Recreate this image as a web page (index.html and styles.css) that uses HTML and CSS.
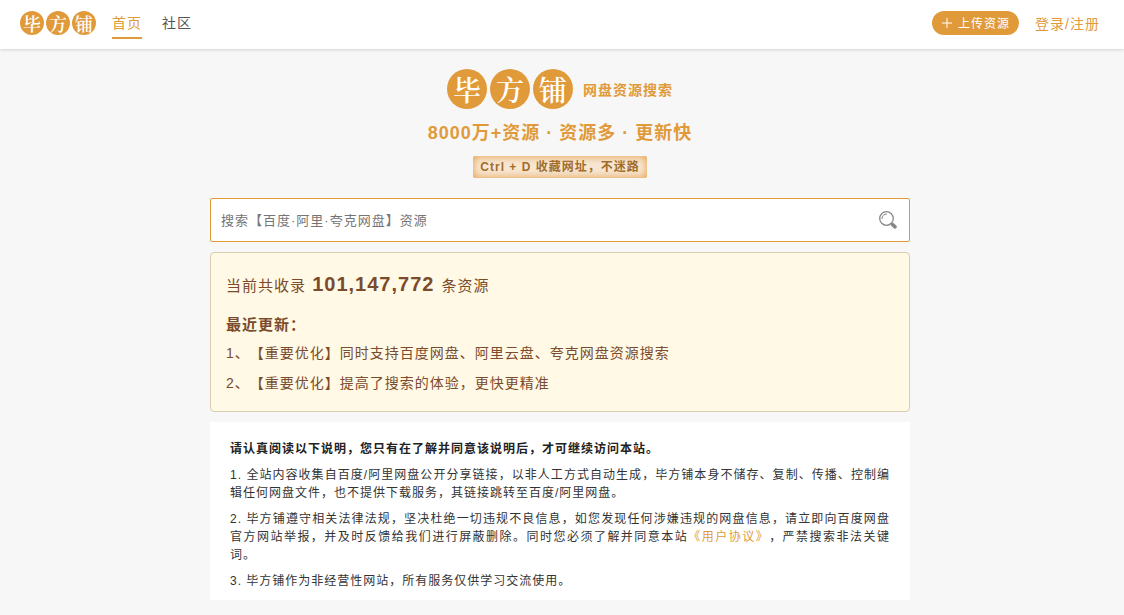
FILE: index.html
```html
<!DOCTYPE html>
<html lang="zh-CN">
<head>
    <meta charset="UTF-8">
    <meta name="viewport" content="width=device-width, initial-scale=1.0">
    <title>毕方铺 - 网盘资源搜索</title>
    <link rel="stylesheet" href="styles.css">
</head>
<body>
    <header class="header">
        <a class="logo" href="/"><span>毕</span><span>方</span><span>铺</span></a>
        <nav class="nav">
            <a class="active" href="/">首页</a>
            <a href="/community">社区</a>
        </nav>
        <div class="user">
            <button class="upload" type="button">
                <svg width="10" height="10" viewBox="0 0 10 10" aria-hidden="true">
                    <path d="M5 0v10M0 5h10" fill="none" stroke="currentColor"/>
                </svg>
                上传资源
            </button>
            <a class="login" href="/login">登录/注册</a>
        </div>
    </header>

    <main class="main">
        <!-- Brand -->
        <div class="brand">
            <h1 class="logo logo-big"><span>毕</span><span>方</span><span>铺</span></h1>
            <span class="brand-text">网盘资源搜索</span>
        </div>
        <p class="slogan">8000万+资源 · 资源多 · 更新快</p>
        <p class="bookmark">Ctrl + D 收藏网址，不迷路</p>

        <!-- Search -->
        <form class="search">
            <input type="text" name="q" aria-label="搜索" placeholder="搜索【百度·阿里·夸克网盘】资源">
            <button type="submit" aria-label="搜索">
                <svg width="18" height="18" viewBox="0 0 18 18" fill="none" stroke="#888">
                    <circle cx="7.5" cy="7.5" r="6.8" stroke-width="1.3"/>
                    <path d="M3 8A4.6 4.6 0 0 1 8 3" stroke-width="1"/>
                    <path d="M12 12l1.5 1.5" stroke-width="1.5"/>
                    <path d="M13.6 13.6l2.4 2.2" stroke-width="3.6" stroke-linecap="round"/>
                </svg>
            </button>
        </form>

        <!-- Stats and updates -->
        <section class="info">
            <p class="total">当前共收录 <strong>101,147,772</strong> 条资源</p>
            <h2>最近更新：</h2>
            <p>1、【重要优化】同时支持百度网盘、阿里云盘、夸克网盘资源搜索</p>
            <p>2、【重要优化】提高了搜索的体验，更快更精准</p>
        </section>

        <!-- Terms -->
        <section class="notice">
            <h2>请认真阅读以下说明，您只有在了解并同意该说明后，才可继续访问本站。</h2>
            <p>1. 全站内容收集自百度/阿里网盘公开分享链接，以非人工方式自动生成，毕方铺本身不储存、复制、传播、控制编辑任何网盘文件，也不提供下载服务，其链接跳转至百度/阿里网盘。</p>
            <p>2. 毕方铺遵守相关法律法规，坚决杜绝一切违规不良信息，如您发现任何涉嫌违规的网盘信息，请立即向百度网盘官方网站举报，并及时反馈给我们进行屏蔽删除。同时您必须了解并同意本站<a href="/agreement">《用户协议》</a>，严禁搜索非法关键词。</p>
            <p>3. 毕方铺作为非经营性网站，所有服务仅供学习交流使用。</p>
        </section>
    </main>
</body>
</html>
```
FILE: styles.css
```css
* {
    box-sizing: border-box;
}

body {
    margin: 0;
    background: #f7f7f7;
    color: #333;
    font-family: "Liberation Sans", "Noto Sans CJK SC", sans-serif;
    font-size: 14px;
    letter-spacing: 1px;
    text-spacing-trim: space-all;
}

h1, h2, p {
    margin: 0;
}

a {
    color: #e19a3a;
    text-decoration: none;
}

button, input {
    font: inherit;
    letter-spacing: inherit;
    border: 0;
    padding: 0;
}

button {
    cursor: pointer;
}

/* header */
.header {
    display: flex;
    align-items: center;
    height: 49px;
    padding: 0 24px 4px 20px;
    background: #fff;
    box-shadow: 0 1px 3px rgba(0, 0, 0, 0.15);
}

.logo {
    display: flex;
    gap: 2px;
    font-family: "Noto Serif CJK SC", "Noto Sans CJK SC", serif;
    font-size: 18px;
    font-weight: 600;
    letter-spacing: 0;
}

.logo span {
    width: 24px;
    height: 24px;
    border-radius: 50%;
    background: #e19a3a;
    color: #fff;
    line-height: 24px;
    text-align: center;
}

.nav {
    display: flex;
    gap: 20px;
    margin: 3px 0 0 16px;
}

.nav a {
    height: 30px;
    line-height: 28px;
    color: #555;
    border-bottom: 2px solid transparent;
}

.nav .active {
    color: #e19a3a;
    border-color: #e19a3a;
}

.user {
    display: flex;
    align-items: center;
    gap: 16px;
    margin-left: auto;
}

.upload {
    display: flex;
    align-items: center;
    gap: 6px;
    height: 24px;
    padding: 0 9px 0 10px;
    border-radius: 12px;
    background: #e19a3a;
    color: #fff;
    font-size: 12px;
}

/* main column */
.main {
    width: 700px;
    max-width: 100%;
    margin: 0 auto;
    padding: 20px 0 15px;
    position: relative;
    right: 2px;
}

.brand {
    display: flex;
    justify-content: center;
    align-items: center;
    gap: 10px;
}

.logo-big {
    gap: 3px;
    font-size: 28px;
}

.logo-big span {
    width: 40px;
    height: 40px;
    line-height: 40px;
}

.brand-text {
    color: #e19a3a;
    font-weight: bold;
}

.slogan {
    margin-top: 11px;
    color: #e19a3a;
    font-size: 18px;
    font-weight: bold;
    line-height: 27px;
    text-align: center;
}

.bookmark {
    width: fit-content;
    margin: 9px auto 0;
    padding: 0 7px;
    border-radius: 2px;
    background: #f7e6d3;
    box-shadow: inset 0 0 8px #e19a3a;
    color: #a26d2b;
    font-size: 12px;
    font-weight: bold;
    line-height: 22px;
}

.search {
    display: flex;
    height: 44px;
    margin-top: 20px;
    border: 1px solid #e19a3a;
    border-radius: 2px;
    background: #fff;
}

.search input {
    flex: 1;
    padding: 0 10px;
    background: none;
    font-size: 13px;
    outline: none;
}

.search input::placeholder {
    color: #757575;
}

.search button {
    display: flex;
    align-items: center;
    justify-content: center;
    width: 42px;
    background: none;
}

.info {
    margin-top: 10px;
    padding: 15px 15px 13px;
    border: 1px solid #d9ccb0;
    border-radius: 4px;
    background: #fff9e5;
    color: #7a4b2c;
    line-height: 30px;
}

.info .total {
    margin-bottom: 10px;
    font-size: 15px;
    line-height: 32px;
}

.total strong {
    margin: 0 2px 0 1px;
    font-size: 20px;
}

.info h2 {
    font-size: 15px;
    line-height: 26px;
}

.notice {
    margin-top: 10px;
    padding: 18px 20px 10px;
    background: #fff;
    font-size: 12px;
    line-height: 18px;
    text-align: justify;
}

.notice h2 {
    color: #222;
    font-size: 12px;
}

.notice p {
    margin-top: 8px;
}
```
